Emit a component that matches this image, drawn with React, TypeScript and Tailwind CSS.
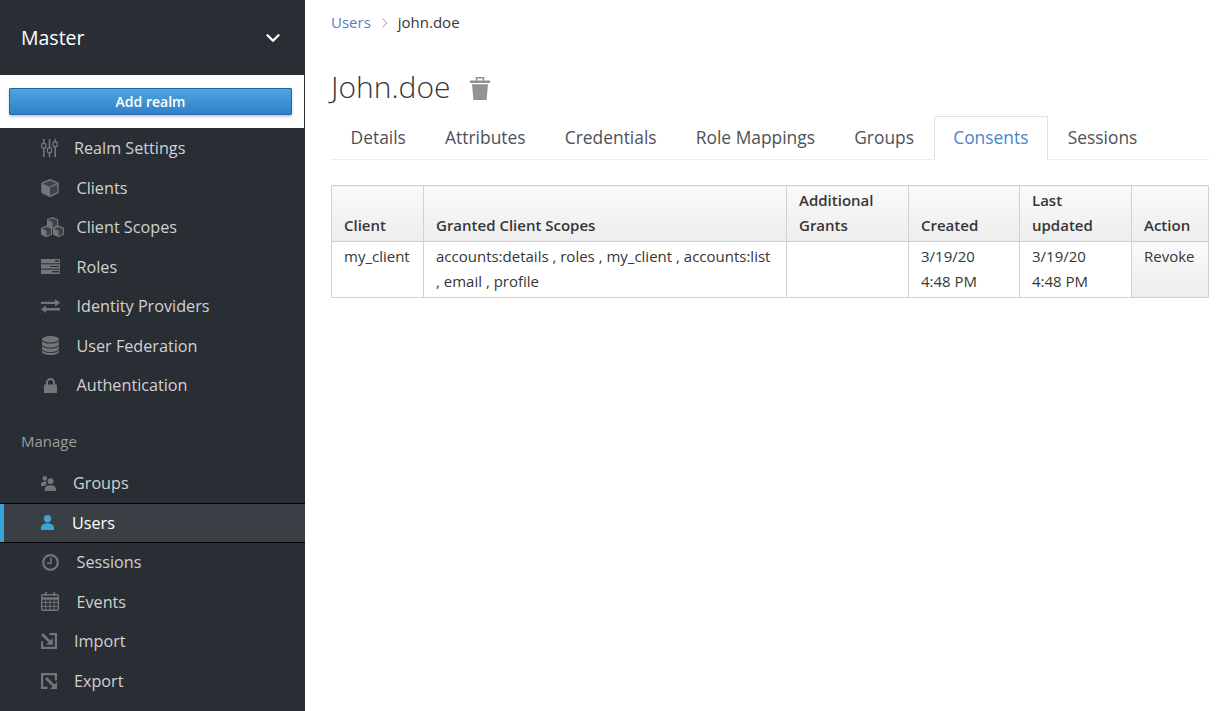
import React from 'react';
import { ChevronDown, ChevronRight } from 'lucide-react';

const DARK = '#292e34';

const SlidersIcon = () => (
  <svg width="17" height="18" viewBox="0 0 17 18" fill="currentColor">
    <rect x="2" y="0" width="1.6" height="18" />
    <rect x="7.7" y="0" width="1.6" height="18" />
    <rect x="13.4" y="0" width="1.6" height="18" />
    <rect x="0.7" y="4.5" width="4.2" height="4.5" rx="1" fill={DARK} stroke="currentColor" strokeWidth="1.3" />
    <rect x="6.4" y="9" width="4.2" height="4.5" rx="1" fill={DARK} stroke="currentColor" strokeWidth="1.3" />
    <rect x="12.1" y="3" width="4.2" height="4.5" rx="1" fill={DARK} stroke="currentColor" strokeWidth="1.3" />
  </svg>
);

const CubeIcon = () => (
  <svg width="18" height="18" viewBox="0 0 18 18">
    <path d="M9 0.8 17 4.2v9.4L9 17.3 1 13.6V4.2z" fill="#3d4248" stroke="currentColor" strokeWidth="1.5" strokeLinejoin="round" />
    <path d="M1 4.6 9 8v9L1 13.5z" fill="currentColor" />
    <path d="M9 8l8-3.6" stroke="currentColor" strokeWidth="1.2" />
  </svg>
);

const SmallCube = ({ x, y }: { x: number; y: number }) => (
  <g transform={`translate(${x} ${y})`}>
    <path d="M5.5 0.6 10.6 2.8v6L5.5 11.2 0.6 8.8V2.8z" fill="#3d4248" stroke="currentColor" strokeWidth="1.2" strokeLinejoin="round" />
    <path d="M0.6 3 5.5 5.2v6L0.6 8.8z" fill="currentColor" />
  </g>
);

const CubesIcon = () => (
  <svg width="23" height="20" viewBox="0 0 23 20">
    <SmallCube x={6} y={0} />
    <SmallCube x={0} y={8.5} />
    <SmallCube x={12} y={8.5} />
  </svg>
);

const ServerIcon = () => (
  <svg width="19" height="15" viewBox="0 0 19 15" fill="currentColor">
    <rect x="0" y="0" width="19" height="4.3" />
    <rect x="0" y="5.3" width="19" height="4.3" />
    <rect x="0" y="10.6" width="19" height="4.4" />
    <rect x="14" y="1.2" width="4" height="1.4" fill={DARK} />
    <rect x="9" y="7" width="9" height="1" fill={DARK} />
    <rect x="11" y="12" width="7" height="1.4" fill={DARK} />
  </svg>
);

const ExchangeIcon = () => (
  <svg width="19" height="14" viewBox="0 0 19 14" fill="currentColor">
    <path d="M0 2.7h14V0l5 3.8-5 3.8V5H0z" />
    <path d="M19 9H5V6.4L0 10.2 5 14v-2.6h14z" />
  </svg>
);

const DatabaseIcon = () => (
  <svg width="17" height="19" viewBox="0 0 17 19" fill="currentColor">
    <ellipse cx="8.5" cy="3.2" rx="8.5" ry="3.2" />
    <path d="M0 5c1.5 1.8 5 2.6 8.5 2.6S15.5 6.8 17 5v3.2c0 1.8-3.8 3.2-8.5 3.2S0 10 0 8.2z" />
    <path d="M0 10c1.5 1.8 5 2.6 8.5 2.6s7-.8 8.5-2.6v2.8c0 1.8-3.8 3.2-8.5 3.2S0 14.6 0 12.8z" />
    <path d="M0 14.6c1.5 1.7 5 2.5 8.5 2.5s7-.8 8.5-2.5v1.2c0 1.8-3.8 3.2-8.5 3.2S0 17.6 0 15.8z" />
  </svg>
);

const LockIcon = () => (
  <svg width="13" height="15" viewBox="0 0 13 15" fill="currentColor">
    <path d="M3 7V4.5a3.500 3.500 0 0 1 7 0V7" fill="none" stroke="currentColor" strokeWidth="2" />
    <rect x="0" y="6.5" width="13" height="8.5" rx="0.6" />
  </svg>
);

const GroupsIcon = () => (
  <svg width="15" height="15" viewBox="0 0 15 15" fill="currentColor">
    <circle cx="3.8" cy="2.4" r="2.3" />
    <path d="M0 10V8.500C0 6.500 1.800 5.500 3.800 5.500c.7 0 1.300.1 1.800.4C5.200 6.600 5.400 7.600 5.900 8.200 4.800 8.700 4 9.300 3.700 10z" />
    <circle cx="9.5" cy="5.2" r="2.9" />
    <path d="M3.800 15v-1.800c0-2.600 2.500-4 5.700-4s5.500 1.400 5.500 4V15z" />
  </svg>
);

const UserIcon = () => (
  <svg width="13" height="15" viewBox="0 0 13 15" fill="currentColor">
    <circle cx="6.5" cy="3.7" r="3.7" />
    <path d="M0 15v-2.200C0 9.800 3 8.300 6.500 8.300s6.500 1.500 6.500 4.500V15z" />
  </svg>
);

const ClockIcon = () => (
  <svg width="17" height="17" viewBox="0 0 17 17" fill="none" stroke="currentColor">
    <circle cx="8.5" cy="8.5" r="7.3" strokeWidth="2.2" />
    <path d="M9 3.800V9.200H4.800" strokeWidth="1.6" />
  </svg>
);

const CalendarIcon = () => (
  <svg width="18" height="19" viewBox="0 0 18 19" fill="none" stroke="currentColor">
    <rect x="0.7" y="2.7" width="16.6" height="15.6" rx="1" strokeWidth="1.4" />
    <path d="M0.7 6.500h16.600" strokeWidth="2.5" />
    <path d="M0.7 10.300h16.600M0.7 14.300h16.600M4.800 6.500v11.800M9 6.500v11.800M13.200 6.500v11.800" strokeWidth="1" />
    <path d="M4.800 0v4M13.200 0v4" strokeWidth="1.8" />
  </svg>
);

const ImportIcon = () => (
  <svg width="16" height="16" viewBox="0 0 16 16" fill="none" stroke="currentColor">
    <path d="M8.500 1.100h6.400v13.800H1.100V8.500" strokeWidth="2.2" />
    <path d="M1 1l9 9" strokeWidth="2.6" />
    <path d="M11.800 5v6.800H5z" fill="currentColor" strokeWidth="0" />
  </svg>
);

const ExportIcon = () => (
  <svg width="16" height="16" viewBox="0 0 16 16" fill="none" stroke="currentColor">
    <path d="M6.500 14.900H1.100V1.100h13.800v6.400" strokeWidth="2.2" />
    <path d="M5 5l8 8" strokeWidth="2.6" />
    <path d="M16 9v7H9z" fill="currentColor" strokeWidth="0" />
  </svg>
);

const TrashIcon = () => (
  <svg width="20" height="23" viewBox="0 0 20 23" fill="#929292" className="ml-[19px] mt-[4px]">
    <path d="M6.500 4V0.800h7V4" fill="none" stroke="#929292" strokeWidth="1.5" />
    <rect x="0" y="3.5" width="20" height="2.5" />
    <path d="M2 7.300h16L16.600 23H3.400z" />
  </svg>
);

const configItems = [
  { label: 'Realm Settings', icon: <SlidersIcon />, textClass: 'ml-[33px]' },
  { label: 'Clients', icon: <CubeIcon />, textClass: 'ml-[35.5px]' },
  { label: 'Client Scopes', icon: <CubesIcon />, textClass: 'ml-[35.5px]' },
  { label: 'Roles', icon: <ServerIcon />, textClass: 'ml-[35.5px]' },
  { label: 'Identity Providers', icon: <ExchangeIcon />, textClass: 'ml-[35.5px]' },
  { label: 'User Federation', icon: <DatabaseIcon />, textClass: 'ml-[35.5px]' },
  { label: 'Authentication', icon: <LockIcon />, textClass: 'ml-[35.5px]' },
];

const manageItems = [
  { label: 'Groups', icon: <GroupsIcon />, textClass: 'ml-[32px]' },
  { label: 'Users', icon: <UserIcon />, textClass: 'ml-[31px]', active: true },
  { label: 'Sessions', icon: <ClockIcon />, textClass: 'ml-[35.5px]' },
  { label: 'Events', icon: <CalendarIcon />, textClass: 'ml-[35.5px]' },
  { label: 'Import', icon: <ImportIcon />, textClass: 'ml-[33px]' },
  { label: 'Export', icon: <ExportIcon />, textClass: 'ml-[33px]' },
];

const iconOffsets: Record<string, string> = {
  'User Federation': 'left-[42px]',
  Authentication: 'left-[44px]',
  Sessions: 'left-[42px]',
};

const tabs = ['Details', 'Attributes', 'Credentials', 'Role Mappings', 'Groups', 'Consents', 'Sessions'];

type NavItemProps = {
  label: string;
  icon: React.ReactNode;
  textClass: string;
  active?: boolean;
};

const NavItem = ({ label, icon, textClass, active }: NavItemProps) => (
  <div
    className={
      active
        ? 'h-[39.5px] flex items-center relative bg-[#393f44] border-y border-black text-white'
        : 'h-[39.5px] flex items-center relative text-[#d1d1d1]'
    }
  >
    {active && <div className="absolute left-0 top-0 bottom-0 w-[4px] bg-[#39a5dc]" />}
    <div className={`absolute ${iconOffsets[label] ?? 'left-[41px]'} ${active ? 'text-[#39a5dc]' : 'text-[#72767b]'}`}>
      {icon}
    </div>
    <span className={`${textClass} pl-[41px] text-[16.2px]`}>{label}</span>
  </div>
);

const thClass =
  'border border-[#d1d1d1] bg-gradient-to-b from-[#fafafa] to-[#ededed] px-[12px] pt-[2px] pb-[3px] text-left align-bottom font-semibold leading-[25px]';
const tdClass = 'border border-[#d1d1d1] px-[12px] pt-[2px] pb-[3px] align-top leading-[25px]';

export default function App() {
  return (
    <div className="h-screen w-full flex overflow-hidden bg-white font-['Open_Sans',sans-serif]">
      <aside className="w-[305px] shrink-0 bg-[#292e34]">
        <div className="h-[75px] flex items-center justify-between pl-[21px] pr-[21px] text-white">
          <span className="text-[19.5px]">Master</span>
          <ChevronDown className="w-[22px] h-[22px]" strokeWidth={2.6} />
        </div>
        <div className="h-[53px] w-[304px] bg-white pt-[13px] pl-[9px]">
          <button className="block h-[27px] w-[283px] rounded-[1px] border border-[#1f6aa5] bg-gradient-to-b from-[#4ea4dc] to-[#2f82c8] text-[14px] font-semibold text-white shadow-[0_2px_3px_rgba(3,3,3,0.2)]">
            Add realm
          </button>
        </div>
        <nav className="pt-[0.5px]">
          {configItems.map((item) => (
            <NavItem key={item.label} {...item} />
          ))}
        </nav>
        <div className="h-[58.5px] pl-[21px] pt-[26px] text-[15px] leading-[20px] text-[#9c9c9c]">Manage</div>
        <nav>
          {manageItems.map((item) => (
            <NavItem key={item.label} {...item} />
          ))}
        </nav>
      </aside>

      <main className="flex-1 min-w-0 pl-[26px] pr-[13px] text-[#363636]">
        <div className="h-[45px] flex items-center text-[15px]">
          <span className="text-[#5c7ec0]">Users</span>
          <ChevronRight className="w-[16px] h-[16px] ml-[6px] mr-[5px] text-[#9c9c9c]" strokeWidth={1.5} />
          <span>john.doe</span>
        </div>
        <div className="mt-[18px] h-[46px] flex items-center">
          <h1 className="text-[30px] font-light text-[#363636]">John.doe</h1>
          <TrashIcon />
        </div>
        <div className="mt-[7px] h-[44px] flex border-b border-[#ededed]">
          {tabs.map((tab) => (
            <div
              key={tab}
              className={
                tab === 'Consents'
                  ? 'h-[44px] pb-[2px] px-[18.6px] flex items-center border border-b-0 border-[#e1e1e1] bg-white text-[17.4px] text-[#4a86c8]'
                  : 'h-[44px] pb-[2px] px-[18.6px] flex items-center border border-b-0 border-transparent text-[17.4px] text-[#4d5258]'
              }
            >
              {tab}
            </div>
          ))}
        </div>
        <table className="mt-[25px] w-[877px] table-fixed border-collapse text-[15px]">
          <colgroup>
            <col className="w-[92px]" />
            <col className="w-[363px]" />
            <col className="w-[122px]" />
            <col className="w-[111px]" />
            <col className="w-[112px]" />
            <col className="w-[77px]" />
          </colgroup>
          <thead>
            <tr>
              <th className={thClass}>Client</th>
              <th className={thClass}>Granted Client Scopes</th>
              <th className={thClass}>Additional Grants</th>
              <th className={thClass}>Created</th>
              <th className={thClass}>Last updated</th>
              <th className={thClass}>Action</th>
            </tr>
          </thead>
          <tbody>
            <tr>
              <td className={tdClass}>my_client</td>
              <td className={tdClass}>accounts:details , roles , my_client , accounts:list , email , profile</td>
              <td className={tdClass}></td>
              <td className={tdClass}>3/19/20 4:48 PM</td>
              <td className={tdClass}>3/19/20 4:48 PM</td>
              <td className={`${tdClass} bg-gradient-to-b from-[#fafafa] to-[#ededed]`}>Revoke</td>
            </tr>
          </tbody>
        </table>
      </main>
    </div>
  );
}
